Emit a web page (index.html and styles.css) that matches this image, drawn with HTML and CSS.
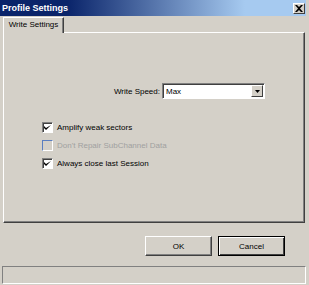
FILE: index.html
```html
<!DOCTYPE html>
<html lang="en">
<head>
  <meta charset="UTF-8">
  <title>Profile Settings</title>
  <link rel="stylesheet" href="styles.css">
</head>
<body>
  <div class="dialog">
    <div class="titlebar">
      <span class="title">Profile Settings</span>
      <button class="close">
        <svg width="8" height="7" viewBox="0 0 8 7"><path d="M0 0h2l2 2 2-2h2L5 3.5 8 7H6L4 5 2 7H0l3-3.5z" fill="#000"/></svg>
      </button>
    </div>

    <div class="tabs">
      <div class="tab">Write Settings</div>
    </div>

    <div class="panel">
      <div class="speed-row">
        <label class="speed-label">Write Speed:</label>
        <div class="select">
          <span class="select-value">Max</span>
          <span class="select-arrow">
            <svg width="5" height="3" viewBox="0 0 5 3"><path d="M0 0h5L2.5 3z" fill="#000"/></svg>
          </span>
        </div>
      </div>

      <div class="options">
        <div class="option">
          <span class="check"><svg width="7" height="7" viewBox="0 0 7 7"><path d="M0 2v2l2 2 5-5V0v1L2 4z" fill="#000"/></svg></span>
          <span>Amplify weak sectors</span>
        </div>
        <div class="option disabled">
          <span class="check"></span>
          <span>Don't Repair SubChannel Data</span>
        </div>
        <div class="option">
          <span class="check"><svg width="7" height="7" viewBox="0 0 7 7"><path d="M0 2v2l2 2 5-5V0v1L2 4z" fill="#000"/></svg></span>
          <span>Always close last Session</span>
        </div>
      </div>
    </div>

    <div class="footer">
      <button class="btn">OK</button>
      <button class="btn default">Cancel</button>
    </div>

    <div class="statusbar"></div>
  </div>
</body>
</html>
```

FILE: styles.css
```css
body {
  margin: 0;
  font-family: "Liberation Sans", Arial, sans-serif;
  font-size: 8px;
  color: #000;
}

.dialog {
  width: 309px;
  height: 285px;
  background-color: #d4d0c8;
  display: flex;
  flex-direction: column;
  overflow: hidden;
}

.titlebar {
  height: 16px;
  margin-right: 3px;
  display: flex;
  align-items: center;
  justify-content: space-between;
  background: linear-gradient(to right, #0a246a 22%, #a6caf0 80%);
}

.title {
  color: #fff;
  font-weight: bold;
  font-size: 9px;
  padding-left: 2px;
}

.close {
  width: 12px;
  height: 11px;
  margin-right: 1px;
  padding: 0;
  display: flex;
  align-items: center;
  justify-content: center;
  background-color: #d4d0c8;
  border: 1px solid;
  border-color: #fff #404040 #404040 #fff;
}

.tabs {
  display: flex;
  padding: 1px 0 0 3px;
}

.tab {
  width: 59px;
  height: 15px;
  line-height: 14px;
  text-align: center;
  border-top: 1px solid #fff;
  border-left: 1px solid #fff;
  border-right: 1px solid #404040;
  box-shadow: inset -1px 0 0 #808080;
  position: relative;
  z-index: 1;
  margin-bottom: -1px;
  background-color: #d4d0c8;
}

.panel {
  height: 189px;
  margin: 0 4px 0 3px;
  border-top: 1px solid #fff;
  border-left: 1px solid #fff;
  border-right: 1px solid #404040;
  border-bottom: 1px solid #404040;
  box-shadow: inset -1px -1px 0 #808080;
}

.speed-row {
  display: flex;
  align-items: center;
  margin-top: 50px;
  padding-left: 104px;
}

.speed-label {
  width: 52px;
  text-align: right;
  padding-right: 2px;
}

.select {
  width: 101px;
  height: 14px;
  display: flex;
  align-items: center;
  justify-content: space-between;
  background-color: #fff;
  border: 1px solid;
  border-color: #808080 #fff #fff #808080;
  box-shadow: inset 1px 1px 0 #404040;
}

.select-value {
  padding-left: 3px;
}

.select-arrow {
  width: 12px;
  height: 12px;
  margin-right: 1px;
  display: flex;
  align-items: center;
  justify-content: center;
  background-color: #d4d0c8;
  box-sizing: border-box;
  border: 1px solid;
  border-color: #fff #404040 #404040 #fff;
}

.options {
  display: flex;
  flex-direction: column;
  gap: 7px;
  margin-top: 23px;
  padding-left: 38px;
}

.option {
  display: flex;
  align-items: center;
  gap: 4px;
  height: 11px;
}

.option.disabled {
  color: #a0a0a0;
}

.check {
  width: 9px;
  height: 9px;
  display: flex;
  align-items: center;
  justify-content: center;
  background-color: #fff;
  border: 1px solid;
  border-color: #808080 #fff #fff #808080;
  box-shadow: inset 1px 1px 0 #404040;
}

.option.disabled .check {
  background-color: #d4d0c8;
  border-color: #5a7ec0 #fff #fff #5a7ec0;
  box-shadow: none;
}

.footer {
  display: flex;
  justify-content: flex-end;
  gap: 6px;
  padding: 13px 24px 0 0;
  height: 30px;
}

.btn {
  width: 67px;
  height: 20px;
  padding: 0;
  font-family: "Liberation Sans", Arial, sans-serif;
  font-size: 8px;
  color: #000;
  background-color: #d4d0c8;
  border: 1px solid;
  border-color: #fff #404040 #404040 #fff;
  box-shadow: inset -1px -1px 0 #808080;
}

.btn.default {
  border: 1px solid #000;
  box-shadow: inset 1px 1px 0 #fff, inset -1px -1px 0 #404040;
}

.statusbar {
  height: 16px;
  margin: 0 3px 0 2px;
  border-top: 1px solid #808080;
  border-left: 1px solid #808080;
  border-right: 1px solid #fff;
  border-bottom: 1px solid #fff;
}
```
